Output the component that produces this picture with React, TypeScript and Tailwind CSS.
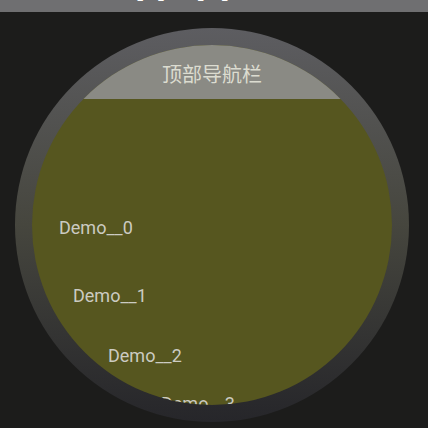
const rows = [
  { label: 'Demo__0', cls: 'mt-[118px] ml-[27px]' },
  { label: 'Demo__1', cls: 'mt-[46px] ml-[41px]' },
  { label: 'Demo__2', cls: 'mt-[38px] ml-[76px]' },
  { label: 'Demo__3', cls: 'mt-[26px] ml-[129px]' },
];

export default function App() {
  return (
    <div className="w-[428px] h-[428px] overflow-hidden bg-[#1c1c1b] flex flex-col font-['Roboto',sans-serif]">
      {/* emulator window title, mostly scrolled off the top */}
      <div className="h-[12px] shrink-0 bg-[#6f6f71] overflow-hidden">
        <div className="-mt-[11px] ml-[8px] text-[12px] leading-[14px] text-white whitespace-nowrap">
          Android Emulator - Wear_OS_Round_API_30:5554
        </div>
      </div>

      {/* watch bezel */}
      <div className="mt-[16px] ml-[15px] w-[394px] h-[394px] shrink-0 rounded-full p-[17px] bg-gradient-to-b from-[#5d5d61] via-[#46463e] to-[#26262a]">
        <div className="w-full h-full rounded-full overflow-hidden bg-[#56561f] flex flex-col">
          <div className="h-[54px] shrink-0 bg-[#8a8a84] flex items-center justify-center pt-[4px]">
            <span className="text-[20px] text-[#dcdcd0] font-['Noto_Sans_CJK_SC',sans-serif]">顶部导航栏</span>
          </div>
          {rows.map((r) => (
            <div key={r.label} className={`${r.cls} h-[22px] shrink-0 flex items-center`}>
              <span className="text-[18px] leading-[22px] text-[#cbcbc2]">{r.label}</span>
            </div>
          ))}
        </div>
      </div>
    </div>
  );
}
